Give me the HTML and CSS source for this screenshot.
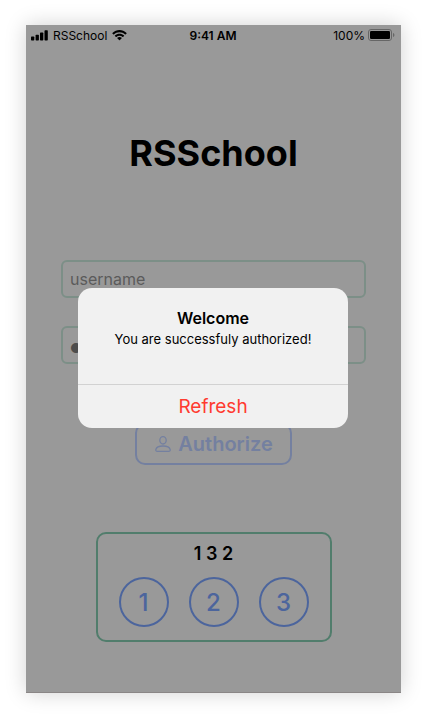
FILE: index.html
```html
<!DOCTYPE html>
<html lang="en">
<head>
<meta charset="utf-8">
<meta name="viewport" content="width=device-width, initial-scale=1">
<title>RSSchool</title>
<link rel="stylesheet" href="styles.css">
</head>
<body>
<div class="screen">
  <header class="status">
    <div class="status-side">
      <svg class="signal" width="17" height="11" viewBox="0 0 17 11" aria-hidden="true">
        <rect x="0" y="6.5" width="3.3" height="4" rx=".7"/>
        <rect x="4.6" y="4.8" width="3.3" height="5.7" rx=".7"/>
        <rect x="9" y="2.6" width="3.3" height="7.9" rx=".7"/>
        <rect x="13.5" y="0.3" width="3.3" height="10.2" rx=".7"/>
      </svg>
      <span>RSSchool</span>
      <svg class="wifi" width="15" height="11" viewBox="0 0 15 11" aria-hidden="true">
        <path d="M7.5 2.2c2.1 0 4.1.8 5.6 2.3.1.1.3.1.4 0l1.1-1.1c.1-.1.1-.3 0-.4C10.6-1 4.400-1 .4 3c-.1.1-.1.3 0 .4l1.1 1.1c.1.1.3.1.4 0C3.4 3 5.4 2.2 7.5 2.2z"/>
        <path d="M7.5 5.8c1.1 0 2.2.4 3.1 1.2.1.1.3.1.4 0l1.1-1.1c.1-.1.1-.3 0-.4-2.600-2.500-6.600-2.500-9.200 0-.1.1-.1.3 0 .4L4 7c.1.1.3.1.4 0 .9-.8 2-1.200 3.100-1.200z"/>
        <path d="M9.7 8.200c.1-.1.1-.3 0-.4-1.300-1.100-3.100-1.100-4.400 0-.1.1-.1.3 0 .4l2 2c.1.1.3.1.4 0z"/>
      </svg>
    </div>
    <strong class="clock">9:41 AM</strong>
    <div class="status-side status-right">
      <span>100%</span>
      <svg class="battery" width="27" height="12" viewBox="0 0 27 12" aria-hidden="true">
        <rect class="shell" x=".5" y=".5" width="23" height="11" rx="2.5"/>
        <rect x="2" y="2" width="20" height="8" rx="1.2"/>
        <path class="cap" d="M25 4v4c.8-.3 1.4-1.1 1.4-2S25.8 4.3 25 4z"/>
      </svg>
    </div>
  </header>
  <main class="content">
    <h1>RSSchool</h1>
    <form class="login">
      <input class="field" type="text" placeholder="username" aria-label="username">
      <input class="field password" type="password" value="password" aria-label="password">
      <button class="authorize" type="button">
        <svg width="18" height="18" viewBox="0 0 18 18" aria-hidden="true">
          <ellipse cx="9" cy="5.3" rx="3.2" ry="3.7"/>
          <path d="M3.3 16.3h11.4c1.1 0 1.7-.7 1.5-1.7-.5-2.3-3.3-3.6-7.2-3.6s-6.700 1.300-7.200 3.600c-.2 1 .4 1.700 1.500 1.700z"/>
        </svg>
        <span>Authorize</span>
      </button>
    </form>
    <section class="secure" aria-label="Secure code">
      <output class="code">1 3 2</output>
      <div class="keys">
        <button class="key" type="button">1</button>
        <button class="key" type="button">2</button>
        <button class="key" type="button">3</button>
      </div>
    </section>
  </main>
  <div class="overlay">
    <div class="alert" role="alertdialog" aria-labelledby="alert-title" aria-describedby="alert-text">
      <div class="alert-body">
        <h2 id="alert-title">Welcome</h2>
        <p id="alert-text">You are successfuly authorized!</p>
      </div>
      <button class="refresh" type="button">Refresh</button>
    </div>
  </div>
</div>
</body>
</html>
```
FILE: styles.css
```css
* {
  box-sizing: border-box;
}

body {
  margin: 0;
  min-height: 100vh;
  padding: 25px 25px 25px 26px;
  display: flex;
  background: #fff;
  color: #000;
  font-family: Inter, "Liberation Sans", sans-serif;
}

button,
input {
  font-family: inherit;
}

h1,
h2,
p {
  margin: 0;
}

.screen {
  position: relative;
  flex: 1;
  background: #999;
  border-bottom: 1px solid #8a8686;
  box-shadow: 0 0 20px rgba(0, 0, 0, 0.18);
}

.status {
  display: grid;
  grid-template-columns: 1fr auto 1fr;
  align-items: center;
  height: 20px;
  padding: 0 6px 0 5px;
  font-size: 12px;
}

.status-side {
  display: flex;
  align-items: center;
  gap: 5px;
}

.status-right {
  justify-content: flex-end;
  gap: 3px;
}

.clock {
  font-weight: 600;
}

.battery .shell {
  fill: none;
  stroke: #666;
}

.battery .cap {
  fill: #666;
}

.content {
  display: flex;
  flex-direction: column;
  align-items: center;
  padding: 84px 35px 50px;
}

h1 {
  font-size: 36px;
  line-height: 48px;
  font-weight: 700;
}

.login {
  width: 100%;
  margin-top: 83px;
  display: flex;
  flex-direction: column;
  align-items: center;
}

.field {
  width: 100%;
  height: 38px;
  margin-bottom: 28px;
  padding: 0 7px;
  border: 2px solid #7c8f87;
  border-radius: 6px;
  background: transparent;
  color: #4d4d4d;
  font-size: 16px;
}

.field::placeholder {
  color: #5b5b5b;
}

.password {
  padding: 0 4px;
  font-size: 32px;
}

.authorize {
  display: flex;
  align-items: center;
  gap: 6px;
  height: 42px;
  margin-top: 31px;
  padding: 0 17px;
  border: 2px solid #7480a0;
  border-radius: 10px;
  background: transparent;
  color: #7480a0;
  font-size: 20px;
  font-weight: 600;
}

.authorize svg {
  fill: none;
  stroke: #7480a0;
  stroke-width: 1.3;
}

.secure {
  width: 236px;
  margin-top: 67px;
  padding: 9px 20px 13px;
  border: 2px solid #517d6c;
  border-radius: 10px;
  display: flex;
  flex-direction: column;
  align-items: center;
  gap: 12px;
}

.code {
  font-size: 18px;
  line-height: 22px;
  font-weight: 600;
}

.keys {
  display: flex;
  gap: 20px;
}

.key {
  width: 50px;
  height: 50px;
  padding: 0;
  border: 2px solid #4c659d;
  border-radius: 50%;
  background: transparent;
  color: #4c659d;
  font-size: 24px;
  font-weight: 500;
}

.overlay {
  position: absolute;
  inset: 0;
  padding: 0 1px 1px 0;
  display: flex;
  align-items: center;
  justify-content: center;
}

.alert {
  width: 270px;
  border-radius: 14px;
  overflow: hidden;
  background: #f1f1f1;
  text-align: center;
}

.alert-body {
  padding: 19px 16px 35px;
}

h2 {
  font-size: 16px;
  line-height: 22px;
  font-weight: 600;
}

.alert-body p {
  font-size: 13px;
  line-height: 20px;
}

.refresh {
  display: block;
  width: 100%;
  height: 44px;
  border: 0;
  border-top: 1px solid #d2d2d2;
  background: transparent;
  color: #ff3b30;
  font-size: 19px;
}
```
